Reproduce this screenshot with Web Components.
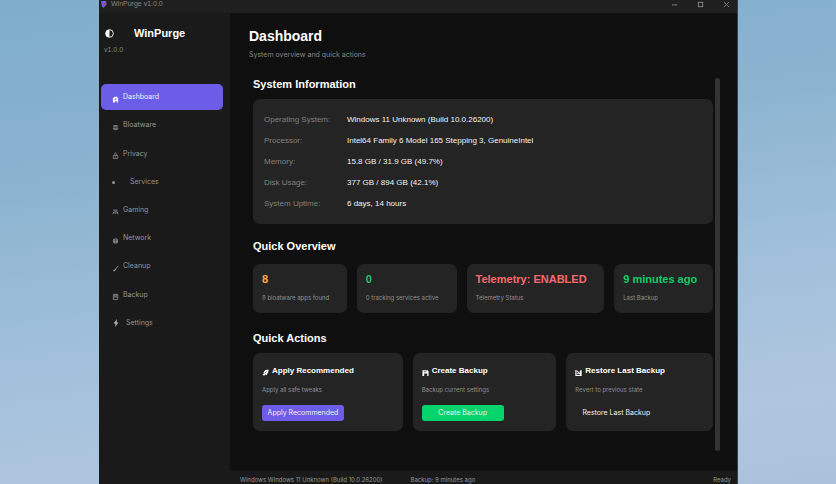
<!DOCTYPE html>
<html lang="en">
<head>
<meta charset="utf-8">
<title>WinPurge</title>
<style>
html, body { height: 100%; }
body {
  margin: 0;
  font-family: "Liberation Sans", Arial, sans-serif;
  background: linear-gradient(172deg, #7fadca 0%, #8ab3d0 30%, #a2c0db 62%, #b0c6e0 85%, #abc1dc 100%);
}
</style>
</head>
<body>
<wp-window></wp-window>
<script>
const ICONS = {
  home: '<path d="M1 7.500V2.500L3 .8h3l1 2v4.700H5.500V6h-2v1.500z" fill="currentColor"/><path d="M3 3h2v1.200H3z" fill="#6c5ce7"/>',
  bin: '<path d="M1 3 2 1h4l1 2z" opacity=".8" fill="currentColor"/><path d="M1 4h6v2L5 7H3L1 6z" fill="currentColor" opacity=".7"/>',
  lock: '<path d="M1.500 4h5v3.500h-5zM3 4V2a1 1 0 0 1 2 0v2M4 5v1.500" fill="none" stroke="currentColor" stroke-width=".8"/>',
  dot: '<circle cx="4" cy="4" r="4" fill="currentColor"/>',
  game: '<path d="M1.500 2.500h5M1 7 2 4.500h4L7 7M3 6h2" fill="none" stroke="currentColor"/>',
  globe: '<circle cx="4" cy="4.500" r="3" fill="currentColor" opacity=".85"/><path d="M1.500 3.500h5M4 2v5" stroke="#1a1a1a" stroke-width=".4"/>',
  broom: '<path d="M7 1 4 5" stroke="currentColor"/><path d="M4.500 4 1 6.500l1.500 1L5 5z" fill="currentColor"/>',
  disk: '<path d="M1.500 1.500h5v6h-5zM2 4.500h4M3 2v1.500h2V2" fill="none" stroke="currentColor" stroke-width=".9"/>',
  bolt: '<path d="M5 0 1.500 4.500h2L3 8l3.500-4.500H4.500z" fill="currentColor"/>',
  rocket: '<path d="M7.500.5 4 1 1.500 4l1 .5L.5 6.500 1.500 7.500l2-.5.5-1 1 1 2-3z" fill="currentColor"/><path d="m3 5 2-2" stroke="#242424" stroke-width=".7"/>',
  save: '<path d="M.5 1.500h6l1 1v5.500H6V5H2.500v3h-2z" fill="currentColor"/><path d="M2 2.800h3v.8H2z" fill="#242424"/>',
  restore: '<path d="M1 1v6.500h6V1M2 2l4 4V2M2 5.500h2" fill="none" stroke="currentColor" stroke-width="1.200"/>',
  shield: '<circle cx="4" cy="4" r="3.400" fill="none" stroke="currentColor" stroke-width=".8"/><path d="M4 .6a3.400 3.400 0 0 0 0 6.800z" fill="currentColor"/>',
  app: '<path d="M0 0h6v4L3 8 1 6z" fill="#6c5ce7"/><path d="M3 2h3v3H3z" fill="#a0527c"/>',
  min: '<path d="M1 4.500h6" stroke="currentColor"/>',
  max: '<rect x="1.500" y="1.500" width="5" height="5" fill="none" stroke="currentColor"/>',
  close: '<path d="m1 1 6 6M7 1 1 7" fill="none" stroke="currentColor" stroke-width=".9"/>'
};

function define(name, html, setup) {
  customElements.define(name, class extends HTMLElement {
    connectedCallback() {
      if (this.shadowRoot) return;
      const t = document.createElement('template');
      t.innerHTML = '<style>*{box-sizing:border-box}</style>' + html;
      this.attachShadow({ mode: 'open' }).append(t.content.cloneNode(true));
      if (setup) setup(this, this.shadowRoot);
    }
  });
}

define('wp-icon', `
<style>
:host { display: block; flex: none; width: var(--size, 7px); height: var(--size, 7px); }
svg { display: block; width: 100%; height: 100%; }
</style><svg viewBox="0 0 8 8" aria-hidden="true"></svg>`,
(el, r) => { r.querySelector('svg').innerHTML = ICONS[el.getAttribute('name')]; });

define('wp-titlebar', `
<style>
:host { display: flex; align-items: center; height: 13px; padding: 0 0 5px 2px; background: #1f1f1f; color: #858585; font-size: 7px; line-height: 8px; }
span { margin-left: 3px; flex: 1; }
div { display: flex; gap: 4px; }
button { display: flex; align-items: center; justify-content: center; width: 22px; height: 8px; padding: 0; border: 0; background: none; color: #8c8c8c; }
wp-icon { --size: 7px; }
</style>
<wp-icon name="app"></wp-icon><span>WinPurge v1.0.0</span>
<div>
<button aria-label="Minimize"><wp-icon name="min"></wp-icon></button>
<button aria-label="Maximize"><wp-icon name="max"></wp-icon></button>
<button aria-label="Close"><wp-icon name="close"></wp-icon></button>
</div>`);

define('wp-nav-item', `
<style>
:host { display: block; }
button {
  display: flex; align-items: center; width: 100%; height: 100%; padding: 0 11px; border: 0;
  border-radius: 5px; background: none; color: #949494; font: 7px/10px Inter, sans-serif; text-align: left;
}
:host([active]) button { background: #6c5ce7; color: #f4f2ff; }
i { display: flex; align-self: center; padding-top: 4px; width: var(--lead, 11px); justify-content: flex-start; }
:host([icon=dot]) i { --size: 3px; padding-top: 1px; }
:host([icon=bolt]) i { padding: 0; --size: 8px; color: #b5b5b5; }
</style>
<button><i></i><slot></slot></button>`,
(el, r) => {
  const icon = document.createElement('wp-icon');
  icon.setAttribute('name', el.getAttribute('icon'));
  r.querySelector('i').append(icon);
});

define('wp-sidebar', `
<style>
:host { display: block; padding: 14px 7px 0 2px; background: #1a1a1a; }
header { display: flex; align-items: center; gap: 20px; padding-left: 4px; color: #fff; font-weight: bold; font-size: 11px; line-height: 12px; }
header wp-icon { --size: 9px; }
p { margin: 6px 0 0 3px; color: #858585; font-size: 7px; line-height: 10px; }
nav { display: grid; grid-auto-rows: 1fr; gap: 2px; height: 252px; margin-top: 29px; }
</style>
<header><wp-icon name="shield"></wp-icon>WinPurge</header>
<p>v1.0.0</p>
<nav>
<wp-nav-item icon="home" active>Dashboard</wp-nav-item>
<wp-nav-item icon="bin">Bloatware</wp-nav-item>
<wp-nav-item icon="lock">Privacy</wp-nav-item>
<wp-nav-item icon="dot" style="--lead:18px">Services</wp-nav-item>
<wp-nav-item icon="game">Gaming</wp-nav-item>
<wp-nav-item icon="globe">Network</wp-nav-item>
<wp-nav-item icon="broom">Cleanup</wp-nav-item>
<wp-nav-item icon="disk">Backup</wp-nav-item>
<wp-nav-item icon="bolt" style="--lead:14px">Settings</wp-nav-item>
</nav>`);

define('wp-card', `
<style>
:host { display: block; background: #242424; border-radius: 7px; }
</style><slot></slot>`);

define('wp-system-info', `
<style>
:host { display: block; }
dl { display: grid; grid-template-columns: 83px 1fr; margin: 0; padding: 10px 11px; font-size: 8px; line-height: 21px; white-space: nowrap; }
dt { color: #808080; }
dd { margin: 0; color: #f2f2f2; }
</style>
<wp-card><dl>
<dt>Operating System:</dt><dd>Windows 11 Unknown (Build 10.0.26200)</dd>
<dt>Processor:</dt><dd>Intel64 Family 6 Model 165 Stepping 3, GenuineIntel</dd>
<dt>Memory:</dt><dd>15.8 GB / 31.9 GB (49.7%)</dd>
<dt>Disk Usage:</dt><dd>377 GB / 894 GB (42.1%)</dd>
<dt>System Uptime:</dt><dd>6 days, 14 hours</dd>
</dl></wp-card>`);

define('wp-stat', `
<style>
:host { display: block; min-width: 0; }
div { padding: 9px 9px 11px; white-space: nowrap; }
strong { display: block; font-size: 11px; line-height: 12px; color: var(--tone); }
small { display: block; margin-top: 9px; font: 6px/8px Inter, sans-serif; color: #8f8f8f; }
</style>
<wp-card><div><strong><slot></slot></strong><small><slot name="label"></slot></small></div></wp-card>`);

define('wp-action', `
<style>
:host { display: block; min-width: 0; }
div { padding: 13px 9px 10px; white-space: nowrap; }
h3 { display: flex; align-items: center; gap: 3px; margin: 0; font-size: 8px; line-height: 10px; color: #fff; }
wp-icon { --size: 7px; padding-top: 3px; height: 10px; }
p { margin: 10px 0 11px; font: 6px/8px Inter, sans-serif; color: #8f8f8f; }
button { display: block; width: 82px; height: 16px; padding: 0; border: 0; border-radius: 3px; background: var(--fill, transparent); color: #f0f0f0; font: 7px/16px Inter, sans-serif; }
</style>
<wp-card><div><h3><span></span></h3><p><slot></slot></p><button></button></div></wp-card>`,
(el, r) => {
  const label = el.getAttribute('label');
  const icon = document.createElement('wp-icon');
  icon.setAttribute('name', el.getAttribute('icon'));
  r.querySelector('h3').prepend(icon);
  r.querySelector('span').textContent = label;
  r.querySelector('button').textContent = label;
});

define('wp-dashboard', `
<style>
:host { display: flex; flex-direction: column; min-height: 0; padding: 15px 17px 20px 19px; background: #0f0f0f; }
h1 { margin: 0; color: #fff; font-size: 14px; line-height: 16px; }
p { margin: 6px 0 18px; color: #858585; font: 7px/10px Inter, sans-serif; }
.scroll { display: grid; grid-template-columns: 1fr 5px; gap: 2px; flex: 1; min-height: 0; padding-left: 4px; }
.thumb { background: #333; border-radius: 3px; }
h2 { margin: 0; color: #fff; font-size: 11px; line-height: 12px; }
section { display: grid; gap: 9px; margin-bottom: 16px; }
.overview { gap: 12px; margin-bottom: 19px; }
.stats { display: grid; grid-template-columns: 94fr 100fr 138fr 99fr; gap: 10px; }
.actions { display: grid; grid-template-columns: 150fr 144fr 147fr; gap: 10px; }
</style>
<h1>Dashboard</h1>
<p>System overview and quick actions</p>
<div class="scroll"><div>
<section><h2>System Information</h2><wp-system-info></wp-system-info></section>
<section class="overview"><h2>Quick Overview</h2><div class="stats">
<wp-stat style="--tone:#ffaa4c">8<span slot="label">8 bloatware apps found</span></wp-stat>
<wp-stat style="--tone:#0fcb68">0<span slot="label">0 tracking services active</span></wp-stat>
<wp-stat style="--tone:#fa6b6b">Telemetry: ENABLED<span slot="label">Telemetry Status</span></wp-stat>
<wp-stat style="--tone:#0fcb68">9 minutes ago<span slot="label">Last Backup</span></wp-stat>
</div></section>
<section><h2>Quick Actions</h2><div class="actions">
<wp-action icon="rocket" label="Apply Recommended" style="--fill:#6c5ce7">Apply all safe tweaks</wp-action>
<wp-action icon="save" label="Create Backup" style="--fill:#05d36b">Backup current settings</wp-action>
<wp-action icon="restore" label="Restore Last Backup">Revert to previous state</wp-action>
</div></section>
</div><div class="thumb"></div></div>`);

define('wp-status', `
<style>
:host { display: flex; gap: 28px; height: 13px; padding: 4px 6px 0 10px; background: #1a1a1a; color: #979797; font: 6px/9px Inter, sans-serif; white-space: nowrap; }
span:last-child { margin-left: auto; }
</style>
<span>Windows Windows 11 Unknown (Build 10.0.26200)</span><span>Backup: 9 minutes ago</span><span>Ready</span>`);

define('wp-window', `
<style>
:host { display: grid; grid-template: auto 1fr auto / 131px 1fr; height: 100vh; margin: 0 98px 0 99px; background: #1a1a1a; border-right: 1px solid #2c4357; }
wp-titlebar { grid-column: 1 / -1; }
wp-sidebar { grid-row: 2 / 4; }
</style>
<wp-titlebar></wp-titlebar><wp-sidebar></wp-sidebar><wp-dashboard></wp-dashboard><wp-status></wp-status>`);
</script>
</body>
</html>
